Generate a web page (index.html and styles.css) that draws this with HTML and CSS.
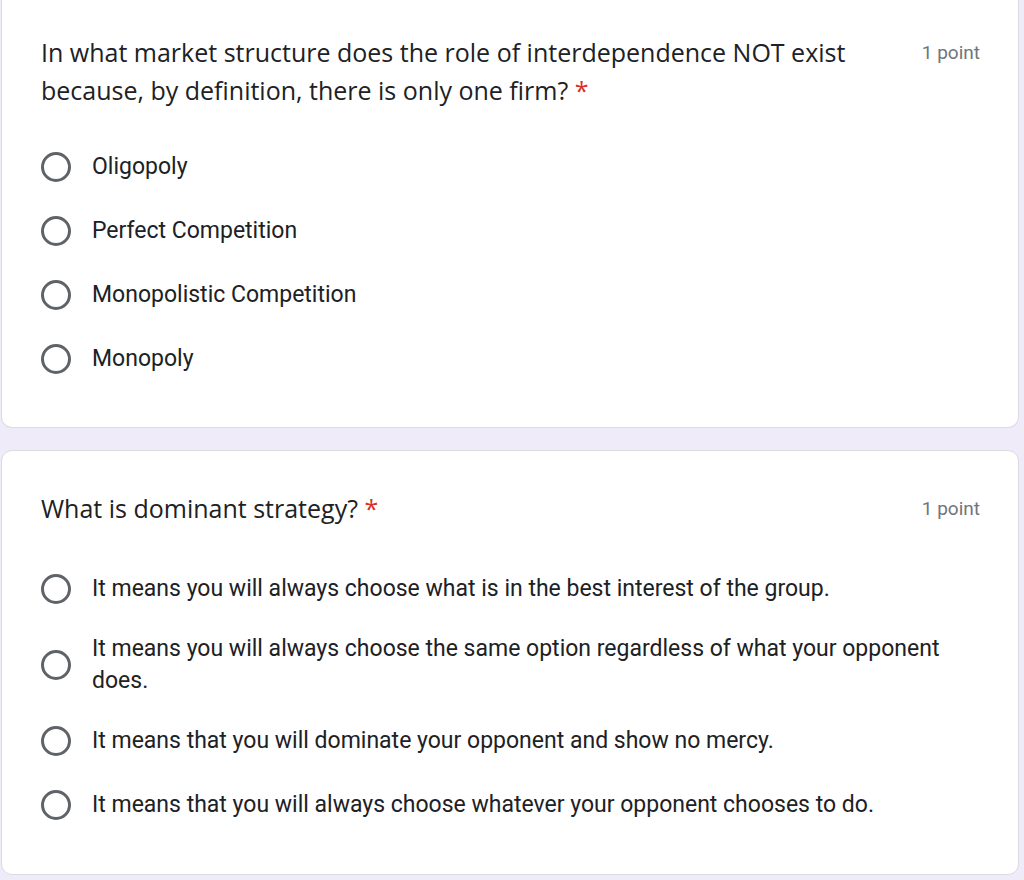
FILE: index.html
```html
<!DOCTYPE html>
<html>
<head>
<meta charset="utf-8">
<link rel="stylesheet" href="styles.css">
</head>
<body>
<div class="card card-first">
  <div class="head">
    <div class="title">In what market structure does the role of interdependence NOT exist because, by definition, there is only one firm? <span class="req">*</span></div>
    <div class="points">1 point</div>
  </div>
  <div class="options">
    <label class="opt"><span class="radio"><span class="ring"></span></span><span class="text">Oligopoly</span></label>
    <label class="opt"><span class="radio"><span class="ring"></span></span><span class="text">Perfect Competition</span></label>
    <label class="opt"><span class="radio"><span class="ring"></span></span><span class="text">Monopolistic Competition</span></label>
    <label class="opt"><span class="radio"><span class="ring"></span></span><span class="text">Monopoly</span></label>
  </div>
</div>
<div class="card">
  <div class="head">
    <div class="title">What is dominant strategy? <span class="req">*</span></div>
    <div class="points">1 point</div>
  </div>
  <div class="options">
    <label class="opt"><span class="radio"><span class="ring"></span></span><span class="text">It means you will always choose what is in the best interest of the group.</span></label>
    <label class="opt"><span class="radio"><span class="ring"></span></span><span class="text">It means you will always choose the same option regardless of what your opponent does.</span></label>
    <label class="opt"><span class="radio"><span class="ring"></span></span><span class="text">It means that you will dominate your opponent and show no mercy.</span></label>
    <label class="opt"><span class="radio"><span class="ring"></span></span><span class="text">It means that you will always choose whatever your opponent chooses to do.</span></label>
  </div>
</div>
</body>
</html>
```
FILE: styles.css
```css
html, body {
  margin: 0;
  padding: 0;
  background: #f0ebf8;
}
body {
  font-family: Roboto, "Liberation Sans", sans-serif;
  color: #202124;
  width: 1024px;
  height: 880px;
  overflow: hidden;
}
.card {
  background: #fff;
  border: 1px solid #dadce0;
  border-radius: 11px;
  margin: 0 5px 0 1px;
  padding: 38px 38px 49px 39px;
}
.card-first {
  border-top: none;
  border-top-left-radius: 0;
  border-top-right-radius: 0;
  padding-top: 33px;
  padding-bottom: 48px;
  margin-bottom: 22px;
}
.head {
  display: flex;
  justify-content: space-between;
  align-items: flex-start;
  gap: 60px;
  margin-bottom: 41px;
}
.card-first .head {
  margin-bottom: 38px;
}
.title {
  font-family: "Open Sans", Roboto, sans-serif;
  font-size: 25px;
  line-height: 38px;
}
.req {
  color: #d93025;
}
.points {
  font-size: 19px;
  line-height: 38px;
  color: #70757a;
  white-space: nowrap;
  padding-top: 1px;
}
.options {
  display: flex;
  flex-direction: column;
  gap: 24px;
}
.opt {
  display: flex;
  align-items: center;
  gap: 21px;
  min-height: 40px;
}
.radio {
  flex: none;
  width: 30px;
  height: 40px;
  display: flex;
  align-items: center;
}
.ring {
  width: 24px;
  height: 24px;
  border: 3px solid #5f6368;
  border-radius: 50%;
}
.text {
  font-size: 23px;
  line-height: 32px;
}
```
